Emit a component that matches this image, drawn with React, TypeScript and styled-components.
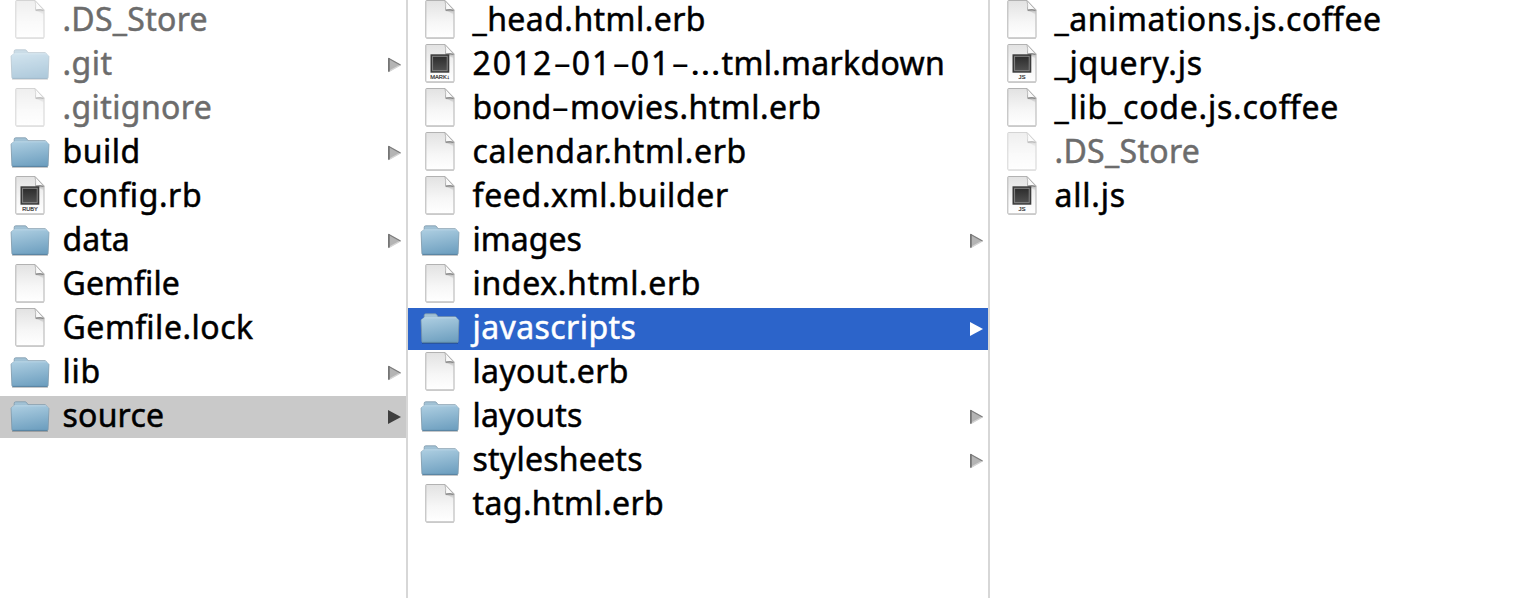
import React from 'react';
import styled, { createGlobalStyle, css } from 'styled-components';

const GlobalStyle = createGlobalStyle`
  body {
    margin: 0;
    background: #fff;
    overflow: hidden;
  }
`;

type Selection = 'active' | 'inactive';
type Part = { text: string; spacing?: number; stretch?: number; width?: number };
type Entry = {
  name: string | Part[];
  kind: 'folder' | 'file' | 'code';
  badge?: string;
  spacing?: number;
  hidden?: boolean;
  selected?: Selection;
};

const Browser = styled.main`
  display: flex;
  width: 1532px;
  height: 598px;
  background: #fff;
  overflow: hidden;
`;

const Column = styled.ul<{ $width: number; $inset: number; $last?: boolean }>`
  box-sizing: border-box;
  flex: none;
  width: ${p => p.$width}px;
  margin: 0;
  padding: 0;
  list-style: none;
  display: flex;
  flex-direction: column;
  gap: 2px;
  --inset: ${p => p.$inset}px;
  ${p => !p.$last && css`border-right: 2px solid #d7d7d7;`}
`;

const Row = styled.li<{ $selected?: Selection; $hidden?: boolean }>`
  box-sizing: border-box;
  flex: none;
  display: flex;
  align-items: center;
  height: 42px;
  padding: 0 5px 0 var(--inset);
  color: ${p => (p.$selected === 'active' ? '#fff' : p.$hidden ? '#6c6c6c' : '#000')};
  background: ${p =>
    p.$selected === 'active' ? '#2c64ca' : p.$selected === 'inactive' ? '#c9c9c9' : 'transparent'};
`;

const IconSlot = styled.span<{ $dim?: boolean }>`
  flex: none;
  width: 40px;
  height: 42px;
  opacity: ${p => (p.$dim ? 0.55 : 1)};

  svg {
    display: block;
  }
`;

const Name = styled.span<{ $spacing: number }>`
  flex: 1;
  height: 42px;
  padding-left: 12.5px;
  font-family: 'Noto Sans', sans-serif;
  font-size: 32px;
  font-weight: 400;
  line-height: 38px;
  letter-spacing: ${p => p.$spacing}px;
  font-feature-settings: 'liga' 1;
  -webkit-text-stroke: 0.5px currentColor;
  white-space: nowrap;
`;

const Run = styled.span<{ $spacing: number }>`
  letter-spacing: ${p => p.$spacing}px;
`;

const Stretched = styled.span<{ $scale: number; $width: number }>`
  display: inline-block;
  width: ${p => p.$width / p.$scale}px;
  margin-right: ${p => p.$width - p.$width / p.$scale}px;
  letter-spacing: 0;
  -webkit-text-stroke-width: 0;
  transform: scaleX(${p => p.$scale});
  transform-origin: left center;
`;

const ArrowSlot = styled.span`
  flex: none;
  width: 13px;
  height: 42px;

  svg {
    display: block;
  }
`;

const Folder = () => (
  <svg width="40" height="42" viewBox="0 0 40 42">
    <path d="M2 35.4h36" stroke="#000" strokeOpacity=".2" strokeWidth="1.2" />
    <path
      d="M4.2 10V7.3Q4.2 5.8 5.7 5.8H15q1.2 0 1.8 1l1.2 1.9h17q1.1 0 1.2 1.3l2.3 1.9q.5.4.4 1l-.8 20.6q-.1 1.1-1.2 1.1H3.1q-1.1 0-1.2-1.1L1.1 12.4q0-.6.5-.9z"
      fill="url(#folderBack)"
      stroke="#7c97a8"
      strokeWidth=".8"
    />
    <path
      d="M1.6 11.4 4 9.6h32.2l2.3 2.2-1 21.7q0 .9-1 .9H3.4q-1 0-1-.9z"
      fill="url(#folderFront)"
    />
    <path d="M4.2 9.8h32" stroke="#bbd6e6" strokeWidth=".9" />
    <path d="M2.6 34.4h34.8" stroke="#527f9d" strokeWidth=".9" />
  </svg>
);

const Page = () => (
  <>
    <path d="M6.5 38.5h27.4" stroke="#000" strokeOpacity=".15" strokeWidth="1" />
    <path
      d="M6.5.5h18.4L34 9.8v27.4q0 .7-.7.7H6.5q-.7 0-.7-.7V1.2q0-.7.7-.7z"
      fill="url(#page)"
      stroke="#b2b2b2"
      strokeWidth="1"
    />
    <path d="M25.4 9.4q0-1-.2-2.2l8.4 3V15.5Q31 11.6 25.4 11z" fill="url(#foldShade)" />
    <path d="M24.9.5q1.3 3.8.6 9.6 5.2-.9 8.5.3z" fill="#fafafa" stroke="#a3a3a3" strokeWidth=".7" />
    <path d="M26 10.1q4.4-.7 7.4.2" stroke="#777" strokeWidth="1" fill="none" />
  </>
);

const BadgeText = styled.text`
  font-family: 'Liberation Sans', 'DejaVu Sans', sans-serif;
  font-size: 5.8px;
  font-weight: 400;
  fill: #333;
  stroke: #333;
  stroke-width: 0.2px;
`;

const badgeWidths: Record<string, number> = { JS: 7, RUBY: 15.5, 'MARK↓': 19.5 };

const Document = ({ badge }: { badge?: string }) => (
  <svg width="40" height="42" viewBox="0 0 40 42">
    <Page />
    {badge && (
      <>
        <rect x="10.5" y="10.3" width="18.8" height="18.4" fill="#3b3b3b" />
        <rect x="12.6" y="12.3" width="14.6" height="14.4" fill="url(#screen)" stroke="#8b8b8b" strokeWidth=".9" />
        <BadgeText
          x="19.9"
          y="35.3"
          textAnchor="middle"
          textLength={badgeWidths[badge]}
          lengthAdjust="spacingAndGlyphs"
        >
          {badge}
        </BadgeText>
      </>
    )}
  </svg>
);

const Arrow = ({ selected }: { selected?: Selection }) => (
  <svg width="13" height="42" viewBox="0 0 13 42">
    {selected ? (
      <path d="M0 14v14l13-7z" fill={selected === 'active' ? '#fff' : '#3f3f3f'} />
    ) : (
      <>
        <path d="M0 13.8v14.4L13 21z" fill="#b4b4b4" />
        <path d="M1 27.4 12.5 21" stroke="#d4d4d4" strokeWidth="1.4" />
        <path d="M.4 14.3 12.5 21" stroke="#7e7e7e" strokeWidth="1.3" />
        <path d="M.9 14.2v13.4" stroke="#757575" strokeWidth="1.8" />
      </>
    )}
  </svg>
);

const Defs = styled.svg`
  position: absolute;
  width: 0;
  height: 0;
`;

const Gradients = () => (
  <Defs aria-hidden>
    <defs>
      <linearGradient id="folderBack" x1="0" y1="0" x2="0" y2="1">
        <stop offset="0" stopColor="#a5c4d7" />
        <stop offset="1" stopColor="#6c9bb9" />
      </linearGradient>
      <linearGradient id="folderFront" x1="0.35" y1="0" x2="0.6" y2="1">
        <stop offset="0" stopColor="#a9cbdf" />
        <stop offset="1" stopColor="#6fa0c0" />
      </linearGradient>
      <linearGradient id="page" x1="0" y1="0" x2="0" y2="1">
        <stop offset="0" stopColor="#e2e2e2" />
        <stop offset=".6" stopColor="#f7f7f7" />
        <stop offset="1" stopColor="#fff" />
      </linearGradient>
      <linearGradient id="foldShade" x1="0" y1="0" x2="0" y2="1">
        <stop offset="0" stopColor="#777" stopOpacity=".8" />
        <stop offset="1" stopColor="#aaa" stopOpacity="0" />
      </linearGradient>
      <linearGradient id="screen" x1="0" y1="0" x2="0" y2="1">
        <stop offset="0" stopColor="#2c2c2c" />
        <stop offset="1" stopColor="#505050" />
      </linearGradient>
    </defs>
  </Defs>
);

const hyphen: Part = { text: '-', stretch: 1.8, width: 18.5 };

const root: Entry[] = [
  { name: '.DS_Store', kind: 'file', spacing: 0.28, hidden: true },
  { name: '.git', kind: 'folder', spacing: 0.5, hidden: true },
  { name: '.gitignore', kind: 'file', spacing: 0.4, hidden: true },
  { name: 'build', kind: 'folder', spacing: 0.5 },
  { name: 'config.rb', kind: 'code', badge: 'RUBY', spacing: 0.6 },
  { name: 'data', kind: 'folder', spacing: 0 },
  { name: 'Gemfile', kind: 'file', spacing: 0.1 },
  { name: 'Gemfile.lock', kind: 'file', spacing: 0.52 },
  { name: 'lib', kind: 'folder', spacing: 0.8 },
  { name: 'source', kind: 'folder', spacing: 0.22, selected: 'inactive' },
];

const source: Entry[] = [
  { name: '_head.html.erb', kind: 'file', spacing: 0.44 },
  {
    name: [
      { text: '2012', spacing: 1.9 },
      hyphen,
      { text: '01', spacing: 1.9 },
      hyphen,
      { text: '01', spacing: 1.9 },
      hyphen,
      { text: '…', stretch: 1.22, width: 32 },
      { text: 'tml.markdown', spacing: 0.3 },
    ],
    kind: 'code',
    badge: 'MARK↓',
  },
  {
    name: [{ text: 'bond', spacing: 0.1 }, hyphen, { text: 'movies.html.erb', spacing: 0.5 }],
    kind: 'file',
  },
  { name: 'calendar.html.erb', kind: 'file', spacing: 0.69 },
  { name: 'feed.xml.builder', kind: 'file', spacing: 0.65 },
  { name: 'images', kind: 'folder', spacing: 0.02 },
  { name: 'index.html.erb', kind: 'file', spacing: 0.64 },
  { name: 'javascripts', kind: 'folder', spacing: 0.42, selected: 'active' },
  { name: 'layout.erb', kind: 'file', spacing: 0.36 },
  { name: 'layouts', kind: 'folder', spacing: 0.2 },
  { name: 'stylesheets', kind: 'folder', spacing: 0.24 },
  { name: 'tag.html.erb', kind: 'file', spacing: 0.4 },
];

const javascripts: Entry[] = [
  { name: '_animations.js.coffee', kind: 'file', spacing: 0.56 },
  { name: '_jquery.js', kind: 'code', badge: 'JS', spacing: 0.8 },
  { name: '_lib_code.js.coffee', kind: 'file', spacing: 0.78 },
  { name: '.DS_Store', kind: 'file', spacing: 0.32, hidden: true },
  { name: 'all.js', kind: 'code', badge: 'JS', spacing: 0.8 },
];

const FileRow = ({ entry }: { entry: Entry }) => (
  <Row $selected={entry.selected} $hidden={entry.hidden}>
    <IconSlot $dim={entry.hidden}>
      {entry.kind === 'folder' ? <Folder /> : <Document badge={entry.badge} />}
    </IconSlot>
    <Name $spacing={entry.spacing ?? 0}>
      {typeof entry.name === 'string'
        ? entry.name
        : entry.name.map((part, i) =>
            part.stretch ? (
              <Stretched key={i} $scale={part.stretch} $width={part.width ?? 0}>
                {part.text}
              </Stretched>
            ) : (
              <Run key={i} $spacing={part.spacing ?? 0}>
                {part.text}
              </Run>
            ),
          )}
    </Name>
    {entry.kind === 'folder' && (
      <ArrowSlot>
        <Arrow selected={entry.selected} />
      </ArrowSlot>
    )}
  </Row>
);

const FileColumn = (props: { entries: Entry[]; width: number; inset: number; last?: boolean }) => (
  <Column $width={props.width} $inset={props.inset} $last={props.last}>
    {props.entries.map((entry, i) => (
      <FileRow key={i} entry={entry} />
    ))}
  </Column>
);

export default function App() {
  return (
    <>
      <GlobalStyle />
      <Gradients />
      <Browser>
        <FileColumn entries={root} width={408} inset={10} />
        <FileColumn entries={source} width={582} inset={12} />
        <FileColumn entries={javascripts} width={542} inset={12} last />
      </Browser>
    </>
  );
}
